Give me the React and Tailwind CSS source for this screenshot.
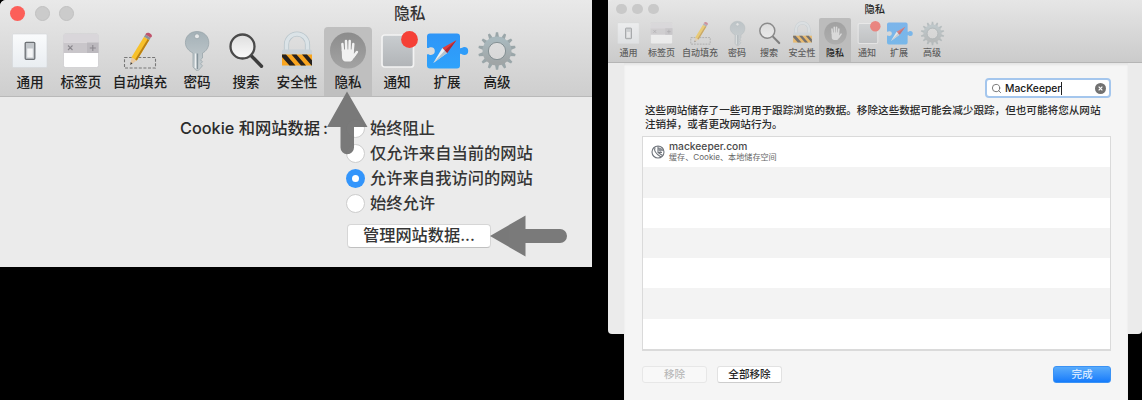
import React from 'react';
import { Search } from 'lucide-react';

const GeneralIcon = () => (
  <>
    <rect x="2.5" y="3" width="34.5" height="33.5" rx="1" fill="url(#panel)" stroke="#d3d7da" strokeWidth="0.6" />
    <rect x="15.2" y="11.3" width="9.6" height="17" rx="1" fill="#c3c7cb" stroke="#6c7074" strokeWidth="1.3" />
    <rect x="17.2" y="17.5" width="5.6" height="9" fill="#f3f4f5" />
  </>
);

const TabsIcon = () => (
  <>
    <rect x="2.5" y="3" width="35" height="33.5" rx="2" fill="#fff" stroke="#c5c3c6" strokeWidth="0.6" />
    <path d="M2.5 11.5V5a2 2 0 0 1 2-2h31a2 2 0 0 1 2 2v6.500z" fill="#d9d6da" />
    <rect x="2.500" y="11.500" width="35" height="10.500" fill="#c9c6ca" />
    <rect x="26" y="11.500" width="11.500" height="10.500" fill="#bcb9be" />
    <path d="M7 14.500l4.500 4.500m0-4.500L7 19M28.800 17h6M31.800 14v6" stroke="#8b888e" strokeWidth="1.100" />
  </>
);

const PencilIcon = () => (
  <>
    <rect x="4.500" y="26.500" width="31" height="10.500" fill="none" stroke="#777" strokeWidth="1.100" strokeDasharray="3 1.600" />
    <path d="M10.300 34l1.200-7.700 5.300 3.200z" fill="#e8c9a0" />
    <path d="M10.300 34l.4-2.800 1.800 1z" fill="#333" />
    <path d="M11.500 26.300L24 5.800l5.300 3.200-12.500 20.500z" fill="#f7c12a" />
    <path d="M15.200 28.500l1.600 1L29.300 9l-1.600-1z" fill="#b97f12" />
    <path d="M24 5.800l1.400-2.200 5.300 3.200L29.300 9z" fill="#8e9399" />
    <path d="M25.400 3.600l.8-1.300c1.600-1.800 6.600.8 5.600 3.100l-1.100 1.400z" fill="#c0536b" />
  </>
);

const KeyIcon = () => (
  <>
    <path d="M20 .5c6.800 0 11.800 4.700 11.800 11.200 0 4.800-2.600 8.600-6.300 10.300v5l-2 1.800 2 2-2 2 2 2-4 4.500h-2.500L16 36V22c-4-1.800-7.600-5.500-7.600-10.300C8.400 5.200 13.200.5 20 .5z" fill="url(#steel)" stroke="#94a0a6" strokeWidth="0.7" />
    <circle cx="20" cy="5.300" r="2.500" fill="#e7e9ea" stroke="#8f9ca2" strokeWidth="0.700" />
    <path d="M20.500 22.500V38" stroke="#85939a" strokeWidth="1.300" />
    <path d="M18.500 22.500V37" stroke="#eef1f2" strokeWidth="1.200" />
  </>
);

const MagnifierIcon = () => (
  <>
    <path d="M25.500 25l10 10.200" stroke="#3c3c3c" strokeWidth="3.400" strokeLinecap="round" />
    <circle cx="16.500" cy="15.500" r="12" fill="url(#glass)" stroke="#4a4a4a" strokeWidth="2.300" />
  </>
);

const LockIcon = () => (
  <>
    <path d="M9.500 21V13.500a10.500 10.500 0 0 1 21 0V21" fill="none" stroke="#b9c5cb" strokeWidth="5.200" />
    <path d="M9.500 21V13.500a10.500 10.500 0 0 1 21 0V21" fill="none" stroke="#dbe3e7" strokeWidth="3.600" />
    <rect x="5" y="18.500" width="30" height="19.500" rx="1.500" fill="#c9d2d8" />
    <rect x="5" y="23.500" width="30" height="11" fill="#f8a51f" />
    <path d="M5 23.500h4l9.500 11h-6L5 26zM14.500 23.500h5l9.500 11h-5zM25 23.500h5l5 5.800v5.200h-.5z" fill="#26221f" />
  </>
);

const HandIcon = () => (
  <>
    <circle cx="20" cy="19.500" r="18" fill="url(#disc)" />
    <g fill="none" stroke="#f1f1f1" strokeWidth="2.500" strokeLinecap="round">
      <path d="M15 20l-.6-7M18.300 19l-.3-9M21.500 19l.2-9M24.600 20.500l.7-7.500M25.500 25.500l3.400-4.500" />
    </g>
    <path d="M13.700 18.500h12.200v4.500l1.900 1-3 4.500c-.8 1.400-2 2-3 2h-4c-2.500 0-3.600-2-3.800-4z" fill="#f1f1f1" />
  </>
);

const NoticeIcon = () => (
  <>
    <rect x="5" y="4" width="31.500" height="32" rx="2.500" fill="url(#slate)" stroke="#f3f3f3" strokeWidth="1.700" />
    <circle cx="32.500" cy="8.500" r="8.400" fill="#f54036" />
  </>
);

const ExtensionIcon = () => (
  <>
    <path d="M3 2.500h27a3 3 0 0 1 3 3V17c1.200 1.200 2.200-.9 4.200-.9a4 4 0 0 1 0 8c-2 0-3-2.100-4.200-.9v11.300a3 3 0 0 1-3 3H3a3 3 0 0 1-3-3V23.500c1.500-1 2 .6 4 .4a3.800 3.800 0 0 0 0-7.600c-2-.2-2.500 1.400-4 .4V5.500a3 3 0 0 1 3-3z" fill="url(#sky)" />
    <path d="M29.300 9.300L15.300 17l4.800 5z" fill="#e03d3d" />
    <path d="M6.300 32l9-15 4.800 5z" fill="#eef2f5" />
    <path d="M6.300 32l11.400-12.500 2.400 2.500z" fill="#b5c4cf" />
    <path d="M29.300 9.300L17.700 19.500l2.400 2.500z" fill="#a92836" />
  </>
);

const GearIcon = () => (
  <>
    <g fill="#9aa6a9">
      {Array.from({ length: 14 }, (_, i) => (
        <path key={i} d="M17.900 7l1-5.800h2.200l1 5.800z" transform={`rotate(${(i * 360) / 14} 20 20)`} />
      ))}
    </g>
    <circle cx="20" cy="20" r="11.500" fill="none" stroke="url(#gear)" strokeWidth="6" />
    <circle cx="20" cy="20" r="8.600" fill="none" stroke="#7f8b8f" strokeWidth="0.900" />
  </>
);

const Defs = () => (
  <svg className="absolute size-0" aria-hidden="true">
    <defs>
      <linearGradient id="panel" x2="0" y2="1"><stop stopColor="#fafbfc" /><stop offset="1" stopColor="#e9edf1" /></linearGradient>
      <linearGradient id="steel" x2="0" y2="1"><stop stopColor="#a4b1b7" /><stop offset="1" stopColor="#c8cfd2" /></linearGradient>
      <linearGradient id="glass" x2="0" y2="1"><stop stopColor="#dedede" /><stop offset="1" stopColor="#fafafa" /></linearGradient>
      <linearGradient id="disc" x2="0" y2="1"><stop stopColor="#8c8c8c" /><stop offset="1" stopColor="#a3a3a3" /></linearGradient>
      <linearGradient id="slate" x2="0" y2="1"><stop stopColor="#c9cdd0" /><stop offset="1" stopColor="#b1b4b7" /></linearGradient>
      <linearGradient id="sky" x2="0" y2="1"><stop stopColor="#2f95f7" /><stop offset="1" stopColor="#2ea2fb" /></linearGradient>
      <linearGradient id="gear" x2="0" y2="1"><stop stopColor="#a9b9be" /><stop offset="1" stopColor="#a0a5a6" /></linearGradient>
    </defs>
  </svg>
);

const items = [
  { label: '通用', Icon: GeneralIcon, lg: 'w-[50px]', sm: 'w-[33px]' },
  { label: '标签页', Icon: TabsIcon, lg: 'w-[52px]', sm: 'w-[33px]' },
  { label: '自动填充', Icon: PencilIcon, lg: 'w-[66px]', sm: 'w-[44px]' },
  { label: '密码', Icon: KeyIcon, lg: 'w-[48px]', sm: 'w-[30px]' },
  { label: '搜索', Icon: MagnifierIcon, lg: 'w-[50px]', sm: 'w-[34px]' },
  { label: '安全性', Icon: LockIcon, lg: 'w-[52px]', sm: 'w-[32px]' },
  { label: '隐私', Icon: HandIcon, lg: 'w-[48px] ml-px', sm: 'w-[32px] ml-px', active: true },
  { label: '通知', Icon: NoticeIcon, lg: 'w-[50px]', sm: 'w-[32px]' },
  { label: '扩展', Icon: ExtensionIcon, lg: 'w-[50px]', sm: 'w-[32px]' },
  { label: '高级', Icon: GearIcon, lg: 'w-[50px]', sm: 'w-[34px]' },
];

function Toolbar({ small }) {
  return (
    <div className={small ? 'flex h-11 pl-1' : 'flex h-[69px] pl-[5px]'}>
      {items.map(({ label, Icon, lg, sm, active }) => (
        <div
          key={label}
          className={`flex shrink-0 flex-col items-center ${small ? `${sm} pt-[3px]` : `${lg} pt-1`} ${active ? (small ? 'rounded-t-xs bg-[#bcbcbc]' : 'rounded-t-sm bg-[#bfbfbf]') : ''}`}
        >
          <svg viewBox="0 0 40 40" className={`shrink-0 overflow-visible ${small ? 'size-[25px] opacity-55' : 'size-10'}`}>
            <Icon />
          </svg>
          <span
            className={`whitespace-nowrap ${small ? `text-[9px] leading-[14px] font-medium ${active ? 'text-[#1c1c1c]' : 'text-[#606060]'}` : 'text-[13.600px] leading-[22px] font-medium text-[#202020]'}`}
          >
            {label}
          </span>
        </div>
      ))}
    </div>
  );
}

const options = ['始终阻止', '仅允许来自当前的网站', '允许来自我访问的网站', '始终允许'];

function PrivacyWindow() {
  return (
    <section className="relative h-[267px] w-[592px] shrink-0 overflow-hidden rounded-tl-md bg-[#ebebeb]">
      <header className="h-[97px] border-b border-[#b9b9b9] bg-linear-to-b from-[#e9e9e9] to-[#cecece]">
        <div className="flex h-[27px] items-center pl-[10px]">
          <div className="flex gap-[9.500px]">
            <i className="size-[15px] rounded-full bg-[#fc5f59]" />
            <i className="size-[15px] rounded-full border border-[#c0c0c0] bg-[#cbcbcb]" />
            <i className="size-[15px] rounded-full border border-[#c0c0c0] bg-[#cbcbcb]" />
          </div>
          <h1 className="ml-[320px] text-[15.800px] leading-[27px] font-medium text-[#353535]">隐私</h1>
        </div>
        <Toolbar />
      </header>
      <div className="flex pt-[19px]">
        <div className="w-[328px] shrink-0 text-right text-[16.300px] leading-[25px] font-medium whitespace-nowrap text-[#2b2b2b]">
          Cookie 和网站数据<span className="ml-[3px]">:</span>
        </div>
        <div className="ml-[18px] flex flex-col items-start">
          {options.map((text, i) => (
            <label key={text} className="flex h-[24.900px] items-center text-[16.300px] leading-[25px] font-medium whitespace-nowrap text-[#353535]">
              <span
                className={`mr-[5px] flex size-[19px] items-center justify-center rounded-full ${i === 2 ? 'bg-[#3395fb]' : 'border border-[#cdcdcd] bg-white'}`}
              >
                {i === 2 && <span className="size-[7px] rounded-full bg-white" />}
              </span>
              {text}
            </label>
          ))}
          <button className="mt-[8px] ml-px h-6 w-[144px] rounded-[4px] border border-[#d6d6d6] border-b-[#c0c0c0] bg-white text-[16.200px] leading-[21px] font-medium whitespace-nowrap text-[#353535]">
            管理网站数据...
          </button>
        </div>
      </div>
      <svg className="absolute inset-0" width="592" height="267" fill="#757575" stroke="none">
        <g opacity="0.960">
          <path d="M347 91.500L367.500 127H354v20.500a6.700 6.700 0 0 1-13.500 0V127H327z" />
          <path d="M490 236l35.500-20.500V229H560a7 7 0 0 1 0 14h-34.500v13.500z" />
        </g>
      </svg>
    </section>
  );
}

function DataWindow() {
  return (
    <section className="h-[334px] w-[534px] shrink-0 rounded-b-sm bg-[#ebebeb]">
      <header className="h-[63px] rounded-tl-sm border-b border-[#b5b5b5] bg-linear-to-b from-[#e6e6e6] to-[#cbcbcb]">
        <div className="flex h-[18px] items-center pl-2">
          <div className="flex gap-[5.500px]">
            <i className="size-[10.500px] rounded-full bg-[#c9c9c9]" />
            <i className="size-[10.500px] rounded-full bg-[#c9c9c9]" />
            <i className="size-[10.500px] rounded-full bg-[#c9c9c9]" />
          </div>
          <h2 className="ml-[206px] text-[10.300px] leading-[18px] font-medium text-[#252525]">隐私</h2>
        </div>
        <Toolbar small />
      </header>
      <div className="ml-4 flex h-[337px] w-[504px] flex-col bg-[#f5f5f5] pt-[15px] pr-[17px] pl-[18px] shadow-[inset_0_2px_2px_#e5e5e5]">
        <div className="flex h-5 w-[126px] shrink-0 items-center self-end rounded-[4px] border-2 border-[#a4c6ed] bg-white pr-[3px] pl-[4px]">
          <Search className="size-[11px] text-[#707070]" strokeWidth={2} />
          <span className="ml-[3px] text-[10.300px] leading-4 font-medium text-[#161616]">MacKeeper</span>
          <span className="h-[13px] w-px bg-[#222]" />
          <svg viewBox="0 0 12 12" className="ml-auto size-[11px]">
            <circle cx="6" cy="6" r="6" fill="#717171" />
            <path d="M4 4l4 4M8 4L4 8" stroke="#fff" strokeWidth="1.300" />
          </svg>
        </div>
        <p className="mt-[6px] ml-[3px] h-7 shrink-0 text-[10.600px] leading-[14px] font-medium whitespace-nowrap text-[#2a2a2a]">
          这些网站储存了一些可用于跟踪浏览的数据。移除这些数据可能会减少跟踪，但也可能将您从网站
          <br />
          注销掉，或者更改网站行为。
        </p>
        <div className="mt-[4px] flex h-[215px] shrink-0 flex-col border border-b-2 border-[#dadada] bg-white">
          <div className="flex flex-1 items-center pl-2">
            <svg viewBox="0 0 14 14" className="size-[14px] shrink-0" fill="none" stroke="#70757c" strokeWidth="1.100">
              <circle cx="7" cy="7" r="6" />
              <path d="M7 1v6.500l4.500 3M4 2.500C2.500 6 5 9 10 12M7 4c2-1 4 0 5.500 2M7 7.500h4" />
              <path d="M7.500 2l4 2.500L10 7 7.500 6z" fill="#8c9198" stroke="none" />
            </svg>
            <div className="ml-1 whitespace-nowrap">
              <div className="text-[10.250px] leading-[11px] font-medium text-[#4a4a4a]">mackeeper.com</div>
              <div className="text-[8.100px] leading-[11px] text-[#666]">缓存、Cookie、本地储存空间</div>
            </div>
          </div>
          <div className="flex-1 bg-[#f3f3f3]" />
          <div className="flex-1" />
          <div className="flex-1 bg-[#f3f3f3]" />
          <div className="flex-1" />
          <div className="flex-1 bg-[#f3f3f3]" />
          <div className="flex-1" />
        </div>
        <div className="mt-[15px] flex shrink-0 text-[10.600px] leading-[15px] font-medium">
          <button className="h-[17px] w-[65px] rounded-[3px] border border-[#e7e7e7] bg-[#f8f8f8] text-[#bababa]">移除</button>
          <button className="ml-[10px] h-[17px] w-[65px] rounded-[3px] border border-[#e2e2e2] border-b-[#cdcdcd] bg-white text-[#252525]">全部移除</button>
          <button className="ml-auto h-[17px] w-[58px] rounded-[3px] border border-[#3a92f5] bg-linear-to-b from-[#58abfb] to-[#147bfb] text-[#d6e8ff]">完成</button>
        </div>
      </div>
    </section>
  );
}

export default function App() {
  return (
    <main className="flex h-[400px] w-[1142px] items-start gap-4 overflow-hidden bg-black font-[Inter,'Noto_Sans_CJK_SC',sans-serif]">
      <Defs />
      <PrivacyWindow />
      <DataWindow />
    </main>
  );
}
